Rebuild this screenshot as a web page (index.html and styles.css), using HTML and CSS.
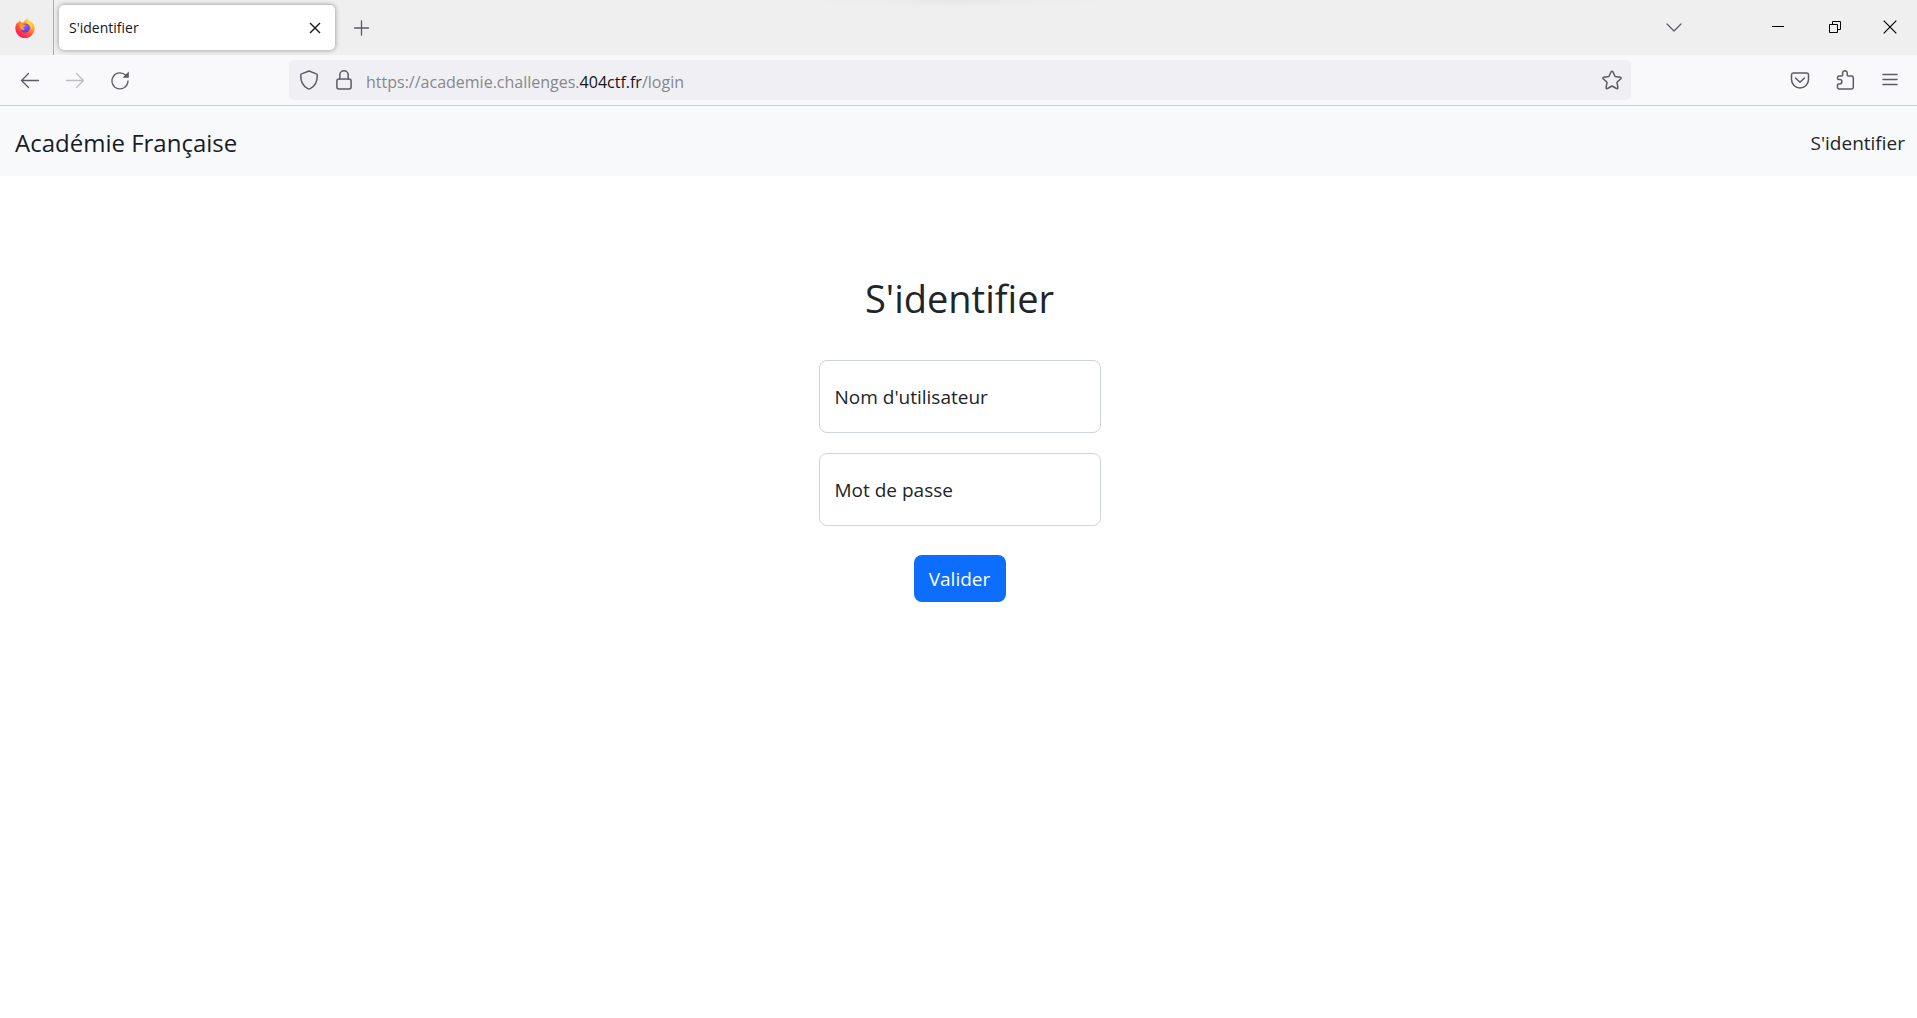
FILE: index.html
```html
<!DOCTYPE html>
<html lang="fr">
<head>
<meta charset="utf-8">
<meta name="viewport" content="width=device-width, initial-scale=1">
<title>S'identifier</title>
<link rel="stylesheet" href="styles.css">
</head>
<body>
<div class="browser">
  <div class="tab-strip">
    <button class="firefox-button" type="button" aria-label="Firefox">
      <svg class="icon" viewBox="0 0 20 20">
        <defs>
          <linearGradient id="flame" x1="0.85" y1="0.05" x2="0.25" y2="0.95">
            <stop offset="0" stop-color="#fff44f"/>
            <stop offset="0.35" stop-color="#ffa02c"/>
            <stop offset="0.65" stop-color="#ff4f3a"/>
            <stop offset="1" stop-color="#f5156c"/>
          </linearGradient>
          <radialGradient id="globe" cx="0.5" cy="0.3" r="0.8">
            <stop offset="0" stop-color="#9059ff"/>
            <stop offset="1" stop-color="#5b38c8"/>
          </radialGradient>
        </defs>
        <path fill="url(#flame)" d="M12.600 0.200c.3 1.900 1.700 2.700 3 4 .2-.3.300-.7.200-1.200 2.500 1.900 3.900 4.600 3.900 7.500a9.700 9.700 0 0 1-19.400 0c0-2.600.9-5 2.300-6.400 0 .7.100 1.100.300 1.500.3-1.200 1.200-2.300 2.200-3 0 .8.400 1.400 1 1.700l2.500.100c.500-2 2-3.300 4-4.200z"/>
        <circle cx="10.200" cy="10" r="4.600" fill="url(#globe)"/>
        <path fill="#ffa02c" d="M4.300 6.500c1.600-.9 3-.6 4 .100l2.300.300c.3.900-1.200 1.500-2 1.900-.3 1.500.2 2.200 1.300 2.400-1.500 1.400-3.600.4-4.400-.5-.8-1.400-1.100-2.700-1.200-4.200z"/>
        <path fill="#ffd43c" d="M12.600.2c.3 1.900 1.700 2.700 3 4 1.800 2.300 2 5 .8 7.200-.2-3.400-2-4.600-3.600-5.800-1.500-1.300-1.700-3.400-.2-5.400z"/>
      </svg>
    </button>
    <div class="tab">
      <span class="tab-title">S'identifier</span>
      <button class="tab-close" type="button" aria-label="Fermer l'onglet">
        <svg class="glyph" viewBox="0 0 12 12"><path d="M1 1l10 10M11 1L1 11"/></svg>
      </button>
    </div>
    <button class="new-tab" type="button" aria-label="Nouvel onglet">
      <svg class="icon line" viewBox="0 0 20 20"><path d="M10.500 3v14M3.500 10h14"/></svg>
    </button>
    <button class="tab-list" type="button" aria-label="Lister les onglets">
      <svg class="icon line" viewBox="0 0 20 20"><path d="M3 6l7 7 7-7"/></svg>
    </button>
    <div class="window-controls">
      <button type="button" aria-label="Réduire">
        <svg class="glyph sharp" viewBox="0 0 12 12"><path d="M0 5.500h12"/></svg>
      </button>
      <button type="button" aria-label="Restaurer">
        <svg class="glyph sharp" viewBox="0 0 12 12"><path d="M.5 3.500h8v8h-8zM3.500 3.500v-3h8v8h-3"/></svg>
      </button>
      <button type="button" aria-label="Fermer">
        <svg class="window-close" viewBox="0 0 14 14"><path d="M.7.7l12.600 12.600M13.300.7L.7 13.300"/></svg>
      </button>
    </div>
  </div>
  <div class="toolbar">
    <div class="history">
      <button type="button" aria-label="Précédent">
        <svg class="icon line" viewBox="0 0 20 20"><path d="M18.500 10.500H1.700M8.500 3.500l-7 7 7 7"/></svg>
      </button>
      <button type="button" aria-label="Suivant" disabled>
        <svg class="icon line" viewBox="0 0 20 20"><path d="M1.500 10.500h16.800M11.500 3.500l7 7-7 7"/></svg>
      </button>
      <button type="button" aria-label="Actualiser">
        <svg class="icon line" viewBox="0 0 20 20"><path d="M18 11a8 8 0 1 1-2.300-5.700"/><path class="solid" d="M18.800 1.500v6.300h-6.300z"/></svg>
      </button>
    </div>
    <div class="address-bar">
      <button type="button" aria-label="Protection contre le pistage">
        <svg class="icon line bold" viewBox="0 0 20 20"><path d="M10 1l7.400 2.900c.6.200.9.600.9 1.300 0 6-2.500 11-7.100 13.400a2.500 2.500 0 0 1-2.400 0C4.200 16.200 1.700 11.200 1.700 5.200c0-.7.3-1.100.9-1.300z"/></svg>
      </button>
      <button type="button" aria-label="Connexion sécurisée">
        <svg class="icon line bold" viewBox="0 0 20 20"><rect x="2.900" y="9" width="14.200" height="10" rx="2"/><path d="M5.800 9V5a4.200 4.200 0 0 1 8.400 0v4"/></svg>
      </button>
      <div class="url" role="textbox" aria-label="Adresse" contenteditable="true" spellcheck="false">https://academie.challenges.<span class="url-domain">404ctf.fr</span>/login</div>
      <button type="button" aria-label="Marquer cette page">
        <svg class="icon line bold" viewBox="0 0 20 20"><path d="M9.100 1.800a1 1 0 0 1 1.800 0l2.200 4.700 5.100.7a.9.900 0 0 1 .5 1.600l-3.700 3.500.9 5.200a.9.900 0 0 1-1.400 1L10 16l-4.500 2.500a.9.900 0 0 1-1.400-1l.9-5.200-3.700-3.500a.9.900 0 0 1 .5-1.600l5.100-.7z"/></svg>
      </button>
    </div>
    <div class="actions">
      <button type="button" aria-label="Enregistrer dans Pocket">
        <svg class="icon line bold" viewBox="0 0 20 20"><path d="M3.500 3h13a2 2 0 0 1 2 2v4.500a8.500 8.500 0 0 1-17 0V5a2 2 0 0 1 2-2zM5.500 8l4.500 4.200L14.500 8"/></svg>
      </button>
      <button type="button" aria-label="Extensions">
        <svg class="icon line bold" viewBox="0 0 20 20"><path d="M7.600 5V3a2.300 2.300 0 0 1 4.600 0v2c0 .6.300 1 1 1h3.400c1 0 1.700.7 1.700 1.700v9.600c0 1-.7 1.700-1.700 1.700H4.200a1.700 1.700 0 0 1-1.700-1.700V15c0-.6.400-1 1-1h1.200a2.200 2.200 0 0 0 0-4.400H3.500c-.6 0-1-.4-1-1v-.9C2.500 6.700 3.200 6 4.200 6h2.400c.7 0 1-.4 1-1z"/></svg>
      </button>
      <button type="button" aria-label="Menu">
        <svg class="icon line bold" viewBox="0 0 20 20"><path d="M3 4.500h14M3 9.500h14M3 14.500h14"/></svg>
      </button>
    </div>
  </div>
</div>
<header class="navbar">
  <a class="brand" href="#">Académie Française</a>
  <nav><a class="nav-link" href="#">S'identifier</a></nav>
</header>
<main>
  <form class="login">
    <h1>S'identifier</h1>
    <div class="field">
      <input id="username" type="text" name="username">
      <label for="username">Nom d'utilisateur</label>
    </div>
    <div class="field">
      <input id="password" type="password" name="password">
      <label for="password">Mot de passe</label>
    </div>
    <button class="submit" type="submit">Valider</button>
  </form>
</main>
</body>
</html>
```
FILE: styles.css
```css
* {
  box-sizing: border-box;
}

body {
  margin: 0;
  background: #fff;
  color: #212529;
  font-family: "Open Sans", "Noto Sans", sans-serif;
  font-size: 19px;
  line-height: 30px;
}

button {
  display: flex;
  align-items: center;
  justify-content: center;
  padding: 0;
  border: 0;
  background: none;
  color: inherit;
  font: inherit;
}

svg {
  display: block;
  fill: none;
  stroke: currentColor;
}

.icon {
  width: 20px;
  height: 20px;
}

.line {
  stroke-width: 1.3;
  stroke-linecap: round;
  stroke-linejoin: round;
}

.bold {
  stroke-width: 1.5;
}

.solid {
  fill: currentColor;
  stroke: none;
}

.glyph {
  width: 12px;
  height: 12px;
  stroke-width: 1.4;
}

.sharp {
  stroke-width: 1;
}

.window-close {
  width: 14px;
  height: 14px;
  stroke-width: 1.2;
}

/* Browser window */
.browser {
  color: #5b5b66;
  border-bottom: 1px solid #ccccce;
}

.tab-strip {
  display: flex;
  align-items: center;
  height: 55px;
  background: radial-gradient(150px 8px at 50% 0, #e8e8e8, #efefef);
}

.firefox-button {
  align-self: stretch;
  width: 54px;
  padding-right: 4px;
  border-right: 1px solid #acacac;
}

.firefox-button svg {
  stroke: none;
}

.tab {
  display: flex;
  align-items: center;
  justify-content: space-between;
  width: 276px;
  height: 45px;
  margin-left: 5px;
  padding: 0 10px;
  border-radius: 5px;
  background: #fff;
  box-shadow: 0 0 5px rgba(0, 0, 0, 0.4);
  color: #15141a;
  font-size: 14px;
}

.tab-close {
  width: 20px;
  height: 20px;
}

.new-tab {
  width: 52px;
  height: 45px;
}

.tab-list {
  width: 44px;
  height: 45px;
  margin-left: auto;
}

.window-controls {
  display: flex;
  align-self: stretch;
  margin-left: 53px;
  padding-bottom: 2px;
  color: #000;
}

.window-controls button {
  width: 57px;
}

.window-controls button:last-child {
  width: 54px;
}

.toolbar {
  display: flex;
  align-items: center;
  justify-content: space-between;
  height: 50px;
  padding: 0 5px;
  background: #f9f9fb;
}

.history,
.actions {
  display: flex;
}

.history button {
  width: 45px;
  height: 40px;
  padding-left: 5px;
}

.history button:disabled {
  color: #bdbdc2;
}

.actions {
  width: 281px;
  justify-content: flex-end;
}

.actions button {
  width: 45px;
  height: 40px;
}

.history {
  width: 284px;
}

.address-bar {
  display: flex;
  flex: 1;
  align-items: center;
  height: 40px;
  padding: 0 2px;
  border-radius: 5px;
  background: #f0f0f4;
}

.address-bar button {
  width: 35px;
  height: 40px;
}

.url {
  flex: 1;
  padding: 3px 0 0 5px;
  color: #87878e;
  font-size: 16px;
  white-space: nowrap;
  outline: none;
}

.url-domain {
  color: #15141a;
}

/* Page */
.navbar {
  display: flex;
  align-items: center;
  justify-content: space-between;
  height: 70px;
  padding: 4px 12px 0 15px;
  background: #f8f9fa;
}

a {
  text-decoration: none;
}

.brand {
  color: #1a1c1f;
  font-size: 24px;
}

.nav-link {
  color: #212529;
}

main {
  padding-left: 2px;
}

.login {
  display: flex;
  flex-direction: column;
  align-items: center;
  width: 282px;
  margin: 0 auto;
  padding-top: 98px;
}

h1 {
  margin: 0 0 38px;
  font-size: 38px;
  font-weight: 400;
  line-height: 48px;
}

.field {
  display: grid;
  width: 100%;
  margin-bottom: 20px;
}

.field input,
.field label {
  grid-area: 1 / 1;
}

.field input {
  width: 100%;
  height: 73px;
  padding: 20px 16px;
  border: 1px solid #ced4da;
  border-radius: 8px;
  background: #fff;
  font: inherit;
}

.field label {
  align-self: center;
  justify-self: start;
  padding-left: 16px;
  pointer-events: none;
}

.submit {
  width: 92px;
  height: 47px;
  margin-top: 9px;
  border-radius: 8px;
  background: #0d6efd;
  color: #fff;
}
```
